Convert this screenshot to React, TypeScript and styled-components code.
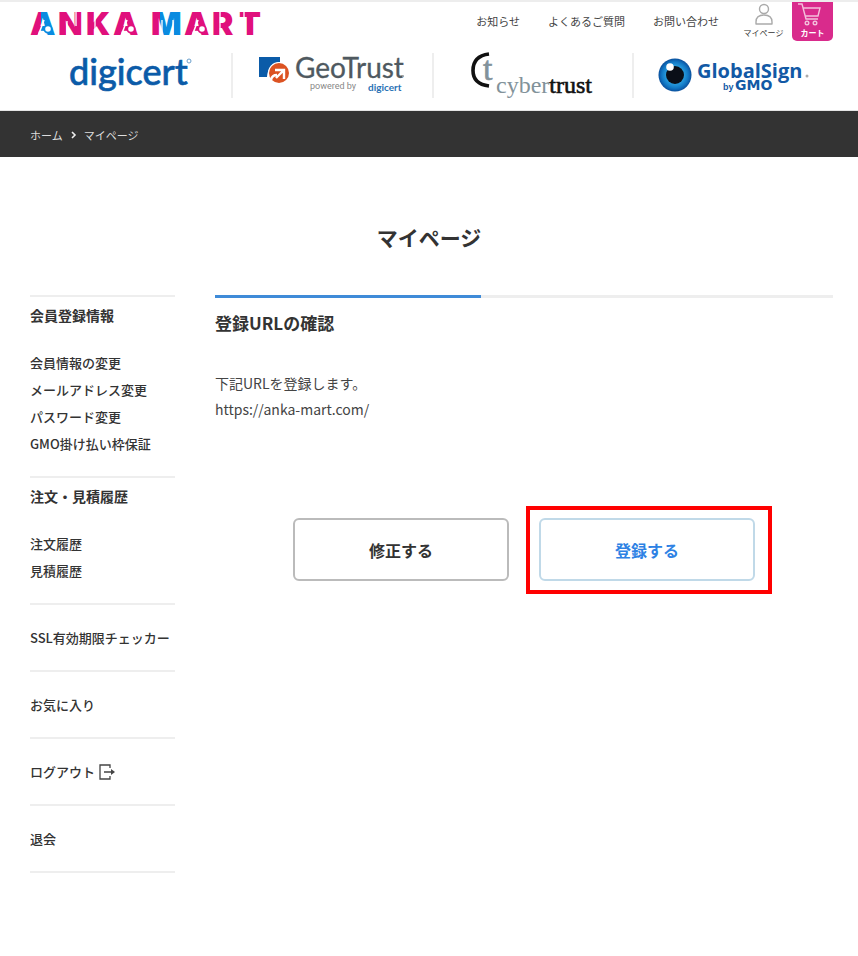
import React from "react";
import styled, { createGlobalStyle, css } from "styled-components";

const GlobalStyle = createGlobalStyle`
  * { box-sizing: border-box; }
  body {
    margin: 0;
    background: #fff;
    color: #333;
    font-family: "Noto Sans CJK JP", "Noto Sans", sans-serif;
    font-size: 13px;
  }
  a { color: inherit; text-decoration: none; }
  ul, ol { list-style: none; margin: 0; padding: 0; }
  svg { display: block; overflow: visible; }
`;

const Header = styled.header`
  border-top: 2px solid #ededed;
  border-bottom: 1px solid #e4e4e4;
  padding: 0 25px 0 30px;
`;

const TopBar = styled.div`
  display: flex;
  justify-content: space-between;
  align-items: flex-start;
  height: 39px;
`;

const BrandLink = styled.a`
  padding-top: 6px;
`;

const Utility = styled.nav`
  display: flex;
  align-items: flex-start;
  font-size: 11px;
  line-height: 16px;
`;

const UtilityLink = styled.a`
  margin: 11px 28px 0 0;
  color: #444;
`;

const IconLink = styled.a<{ $cart?: boolean }>`
  display: flex;
  flex-direction: column;
  align-items: center;
  width: 41px;
  height: 39px;
  padding-top: 1px;
  font-size: 8px;
  line-height: 12px;
  white-space: nowrap;
  ${(p) =>
    p.$cart
      ? css`
          margin-left: 8px;
          background: #d92b8c;
          color: #fff;
          font-weight: 700;
          border-radius: 0 0 5px 5px;
        `
      : css`
          margin-left: -4px;
        `}
`;

const Partners = styled.ul`
  display: grid;
  grid-template-columns: repeat(4, 1fr);
  padding: 12px 0;
`;

const Partner = styled.li`
  display: flex;
  justify-content: center;
  align-items: center;
  height: 45px;
  & + & { border-left: 2px solid #eee; }
`;

const Breadcrumb = styled.nav`
  background: #333;
  color: #ddd;
  font-size: 11px;
  line-height: 16px;
  padding: 16px 30px 14px;
  ol { display: flex; align-items: center; gap: 8px; }
  li { display: flex; align-items: center; gap: 7px; }
`;

const PageTitle = styled.h1`
  margin: 64px 0 42px;
  text-align: center;
  font-size: 21px;
  line-height: 32px;
`;

const Columns = styled.div`
  display: grid;
  grid-template-columns: 145px minmax(0, 1fr);
  gap: 40px;
  padding: 0 25px 40px 30px;
`;

const Sidebar = styled.aside`
  border-bottom: 2px solid #eee;
  align-self: start;
  font-weight: 500;
`;

const MenuGroup = styled.section`
  border-top: 2px solid #eee;
  padding: 6px 0 19px;
`;

const MenuHeading = styled.h2`
  margin: 0 0 22px;
  font-size: 14px;
  line-height: 24px;
`;

const MenuLink = styled.a`
  display: flex;
  align-items: center;
  gap: 4px;
  line-height: 27px;
  white-space: nowrap;
`;

const MenuSingle = styled.div`
  border-top: 2px solid #eee;
  padding: 19px 0;
`;

const Main = styled.main`
  min-width: 0;
`;

const Progress = styled.div`
  display: flex;
  height: 3px;
  background: #eee;
  &::before {
    content: "";
    width: 43%;
    background: #3f8bd8;
  }
`;

const SectionTitle = styled.h2`
  margin: 12px 0 34px;
  font-size: 17px;
  line-height: 26px;
`;

const Message = styled.p`
  margin: 0;
  font-size: 14px;
  line-height: 26px;
  color: #444;
`;

const Actions = styled.div`
  display: flex;
  justify-content: center;
  gap: 30px;
  margin-top: 96px;
`;

const ActionSlot = styled.div`
  position: relative;
  flex: 0 1 216px;
`;

const ActionButton = styled.button<{ $primary?: boolean }>`
  width: 100%;
  height: 63px;
  border: 2px solid ${(p) => (p.$primary ? "#c0d9e8" : "#bbb")};
  border-radius: 6px;
  background: #fff;
  color: ${(p) => (p.$primary ? "#2e82e4" : "#333")};
  font: 700 16px/24px "Noto Sans CJK JP", sans-serif;
  cursor: pointer;
`;

const Highlight = styled.span`
  position: absolute;
  inset: -12px -17px -13px -13px;
  border: 4px solid #f00;
  pointer-events: none;
`;

const PINK = "#e0107c";
const BLUE = "#0a8be0";

const brandLetters = [
  { x: 30, char: "A", fill: "url(#brandA)" },
  { x: 58, char: "N", fill: PINK },
  { x: 86, char: "K", fill: PINK },
  { x: 113, char: "A", fill: PINK },
  { x: 151, char: "M", fill: "url(#brandM)" },
  { x: 184, char: "A", fill: PINK },
  { x: 212, char: "R", fill: PINK },
  { x: 239, char: "T", fill: PINK },
];

const brandRings = [
  { x: 48, color: BLUE },
  { x: 131, color: PINK },
  { x: 202, color: PINK },
];

function AnkaLogo() {
  return (
    <svg width="232" height="30" viewBox="30 8 232 30" role="img" aria-label="ANKA MART">
      <defs>
        <linearGradient id="brandA">
          <stop offset="0.42" stopColor={PINK} />
          <stop offset="0.42" stopColor={BLUE} />
        </linearGradient>
        <linearGradient id="brandM">
          <stop offset="0.3" stopColor={PINK} />
          <stop offset="0.3" stopColor={BLUE} />
        </linearGradient>
      </defs>
      <g fontFamily="Inter" fontWeight="900" fontSize="32">
        {brandLetters.map((l) => (
          <text key={l.x} x={l.x} y="35" fill={l.fill}>{l.char}</text>
        ))}
      </g>
      {brandRings.map((r) => (
        <g key={r.x}>
          <path d={`M${r.x - 10} 36L${r.x - 4} 20`} stroke="#fff" strokeWidth="1.600" />
          <circle cx={r.x} cy="29" r="3.700" fill="#fff" stroke={r.color} strokeWidth="1.800" />
        </g>
      ))}
      <path
        d="M67 21V36M76 11V26M95 11V36M162 20V36M173 20V36M220 11V36M244 18V11"
        stroke="#fff"
        strokeWidth="1.300"
      />
    </svg>
  );
}

function DigicertLogo() {
  return (
    <svg width="122" height="45" viewBox="70 53 122 45" role="img" aria-label="digicert">
      <text x="70" y="85" fontFamily="Lato" fontWeight="500" fontSize="36" fill="#0b5ba8" stroke="#0b5ba8" strokeWidth="0.6">digicert</text>
      <circle cx="190" cy="61" r="2" fill="none" stroke="#6a9fcc" />
    </svg>
  );
}

function GeoTrustLogo() {
  return (
    <svg width="148" height="45" viewBox="258 53 148 45" role="img" aria-label="GeoTrust powered by digicert">
      <path d="M259 57h21v5q-12 1-13 15h-8z" fill="#0b5ba8" />
      <circle cx="279" cy="73" r="11" fill="#fff" />
      <circle cx="279" cy="73" r="10" fill="#dc5322" />
      <path d="M271 80q1-5 6-5M275 70h9v9M284 70l-8 8" fill="none" stroke="#fff" strokeWidth="2.400" />
      <text x="295" y="78" fontFamily="Lato" fontSize="28" fill="#4f5960" stroke="#4f5960" strokeWidth="0.3">GeoTrust</text>
      <circle cx="403" cy="76" r="1" fill="#aaa" />
      <text x="310" y="89" fontFamily="Roboto" fontSize="9" fill="#888">powered by</text>
      <text x="368" y="91" fontFamily="Lato" fontWeight="700" fontSize="10" fill="#2a72b5">digicert</text>
    </svg>
  );
}

function CybertrustLogo() {
  return (
    <svg width="124" height="47" viewBox="471 52 124 47" role="img" aria-label="cybertrust">
      <path d="M489 54Q473 56 473 70.500Q473 84 489 86" fill="none" stroke="#111" strokeWidth="3.600" />
      <text x="483" y="80" fontFamily="Liberation Serif" fontSize="34" fill="#82929a" stroke="#82929a" strokeWidth="0.6">t</text>
      <text x="496" y="93" fontFamily="Liberation Serif" fontSize="24" fill="#82929a">
        cyber<tspan fill="#111" stroke="#111" strokeWidth="0.6">trust</tspan>
      </text>
    </svg>
  );
}

function GlobalSignLogo() {
  return (
    <svg width="152" height="45" viewBox="657 53 152 45" role="img" aria-label="GlobalSign by GMO">
      <defs>
        <radialGradient id="iris">
          <stop offset="0.5" stopColor="#2aa0e0" />
          <stop offset="0.8" stopColor="#1177c4" />
          <stop offset="1" stopColor="#0a4f9c" />
        </radialGradient>
      </defs>
      <circle cx="674" cy="75" r="16.500" fill="url(#iris)" />
      <circle cx="674" cy="75" r="9" fill="#0a0f18" />
      <circle cx="669" cy="67" r="3.800" fill="#fff" />
      <text x="696" y="78" fontFamily="Open Sans" fontWeight="700" fontSize="20" fill="#1259a5">GlobalSign</text>
      <circle cx="806" cy="76" r="1.500" fill="#aaa" />
      <text x="722" y="90" fontFamily="Liberation Sans" fontWeight="700" fontSize="9" fill="#1259a5">by</text>
      <text x="734" y="90" fontFamily="DejaVu Sans" fontWeight="700" fontSize="14" fill="#1259a5">GMO</text>
    </svg>
  );
}

function PersonIcon() {
  return (
    <svg width="20" height="24" viewBox="0 0 20 24" fill="none" stroke="#aaa" strokeWidth="1.400">
      <circle cx="10" cy="6" r="4.500" />
      <path d="M2 21V19Q2 12 10 12Q18 12 18 19V21Z" strokeLinejoin="round" />
    </svg>
  );
}

function CartIcon() {
  return (
    <svg width="26" height="24" viewBox="3 0 26 24" fill="none" stroke="#f3c0dc" strokeWidth="1.400">
      <path d="M1 1H5L9 16H21M6 5H23L21 13H8" />
      <circle cx="10" cy="20" r="1.800" />
      <circle cx="18" cy="20" r="1.800" />
    </svg>
  );
}

function LogoutIcon() {
  return (
    <svg width="17" height="16" viewBox="0 0 17 16" fill="none" stroke="#444" strokeWidth="1.300">
      <path d="M11 4V1H1V15H11V12M5 8H13" />
      <path d="M12 5L16 8L12 11Z" fill="#444" stroke="none" />
    </svg>
  );
}

const accountLinks = ["会員情報の変更", "メールアドレス変更", "パスワード変更", "GMO掛け払い枠保証"];
const historyLinks = ["注文履歴", "見積履歴"];

export default function App() {
  return (
    <>
      <GlobalStyle />
      <Header>
        <TopBar>
          <BrandLink href="#"><AnkaLogo /></BrandLink>
          <Utility>
            <UtilityLink href="#">お知らせ</UtilityLink>
            <UtilityLink href="#">よくあるご質問</UtilityLink>
            <UtilityLink href="#">お問い合わせ</UtilityLink>
            <IconLink href="#"><PersonIcon />マイページ</IconLink>
            <IconLink href="#" $cart><CartIcon />カート</IconLink>
          </Utility>
        </TopBar>
        <Partners>
          <Partner><DigicertLogo /></Partner>
          <Partner><GeoTrustLogo /></Partner>
          <Partner><CybertrustLogo /></Partner>
          <Partner><GlobalSignLogo /></Partner>
        </Partners>
      </Header>
      <Breadcrumb>
        <ol>
          <li><a href="#">ホーム</a></li>
          <li>
            <svg width="6" height="8" viewBox="0 0 6 8" fill="none" stroke="#eee" strokeWidth="1.600">
              <path d="M1 1L4 4L1 7" />
            </svg>
            マイページ
          </li>
        </ol>
      </Breadcrumb>
      <PageTitle>マイページ</PageTitle>
      <Columns>
        <Sidebar>
          <MenuGroup>
            <MenuHeading>会員登録情報</MenuHeading>
            <ul>{accountLinks.map((t) => <li key={t}><MenuLink href="#">{t}</MenuLink></li>)}</ul>
          </MenuGroup>
          <MenuGroup>
            <MenuHeading>注文・見積履歴</MenuHeading>
            <ul>{historyLinks.map((t) => <li key={t}><MenuLink href="#">{t}</MenuLink></li>)}</ul>
          </MenuGroup>
          <MenuSingle><MenuLink href="#">SSL有効期限チェッカー</MenuLink></MenuSingle>
          <MenuSingle><MenuLink href="#">お気に入り</MenuLink></MenuSingle>
          <MenuSingle><MenuLink href="#">ログアウト<LogoutIcon /></MenuLink></MenuSingle>
          <MenuSingle><MenuLink href="#">退会</MenuLink></MenuSingle>
        </Sidebar>
        <Main>
          <Progress />
          <SectionTitle>登録URLの確認</SectionTitle>
          <Message>下記URLを登録します。<br />https://anka-mart.com/</Message>
          <Actions>
            <ActionSlot><ActionButton type="button">修正する</ActionButton></ActionSlot>
            <ActionSlot>
              <ActionButton type="submit" $primary>登録する</ActionButton>
              <Highlight />
            </ActionSlot>
          </Actions>
        </Main>
      </Columns>
    </>
  );
}
